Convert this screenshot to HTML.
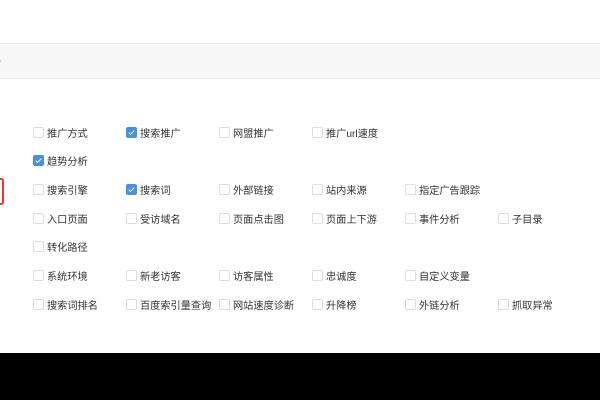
<!DOCTYPE html>
<html><head><meta charset="utf-8"><style>
body{margin:0;width:600px;height:400px;overflow:hidden;background:#fff;position:relative;font-family:"Liberation Sans","Noto Sans CJK SC",sans-serif;font-size:10.2px;color:#333}
.bar{position:absolute;left:0;top:43px;width:600px;height:34px;background:#f7f7f7;border-top:1px solid #e6e6e6;border-bottom:1px solid #eaeaea}
.bar span{position:absolute;left:-3px;top:9px;font-size:12px;color:#555}
.red{position:absolute;left:-8px;top:178px;width:8px;height:23px;border:2px solid #e33;border-radius:3px}
.i{position:absolute;height:14px;line-height:14px;white-space:nowrap}
.i b{display:inline-block;width:9px;height:9px;border:1px solid #ddd;border-radius:2px;vertical-align:-1px;margin-right:3px;background:#fff;position:relative}
.i b.c{background:#4a90e2;border-color:#4a90e2}
.i b.c:after{content:"";position:absolute;left:3px;top:1px;width:2px;height:5px;border:solid #fff;border-width:0 1.5px 1.5px 0;transform:rotate(45deg)}
.blk{position:absolute;left:0;top:353px;width:600px;height:47px;background:#000}
</style></head><body>
<div class="bar"><span>)</span></div>
<div class="red"></div>
<div class="i" style="left:33px;top:127px"><b></b>推广方式</div>
<div class="i" style="left:126px;top:127px"><b class="c"></b>搜索推广</div>
<div class="i" style="left:219px;top:127px"><b></b>网盟推广</div>
<div class="i" style="left:312px;top:127px"><b></b>推广url速度</div>
<div class="i" style="left:33px;top:155px"><b class="c"></b>趋势分析</div>
<div class="i" style="left:33px;top:184px"><b></b>搜索引擎</div>
<div class="i" style="left:126px;top:184px"><b class="c"></b>搜索词</div>
<div class="i" style="left:219px;top:184px"><b></b>外部链接</div>
<div class="i" style="left:312px;top:184px"><b></b>站内来源</div>
<div class="i" style="left:405px;top:184px"><b></b>指定广告跟踪</div>
<div class="i" style="left:33px;top:213px"><b></b>入口页面</div>
<div class="i" style="left:126px;top:213px"><b></b>受访域名</div>
<div class="i" style="left:219px;top:213px"><b></b>页面点击图</div>
<div class="i" style="left:312px;top:213px"><b></b>页面上下游</div>
<div class="i" style="left:405px;top:213px"><b></b>事件分析</div>
<div class="i" style="left:498px;top:213px"><b></b>子目录</div>
<div class="i" style="left:33px;top:241px"><b></b>转化路径</div>
<div class="i" style="left:33px;top:270px"><b></b>系统环境</div>
<div class="i" style="left:126px;top:270px"><b></b>新老访客</div>
<div class="i" style="left:219px;top:270px"><b></b>访客属性</div>
<div class="i" style="left:312px;top:270px"><b></b>忠诚度</div>
<div class="i" style="left:405px;top:270px"><b></b>自定义变量</div>
<div class="i" style="left:33px;top:299px"><b></b>搜索词排名</div>
<div class="i" style="left:126px;top:299px"><b></b>百度索引量查询</div>
<div class="i" style="left:219px;top:299px"><b></b>网站速度诊断</div>
<div class="i" style="left:312px;top:299px"><b></b>升降榜</div>
<div class="i" style="left:405px;top:299px"><b></b>外链分析</div>
<div class="i" style="left:498px;top:299px"><b></b>抓取异常</div>
<div class="blk"></div>
</body></html>
